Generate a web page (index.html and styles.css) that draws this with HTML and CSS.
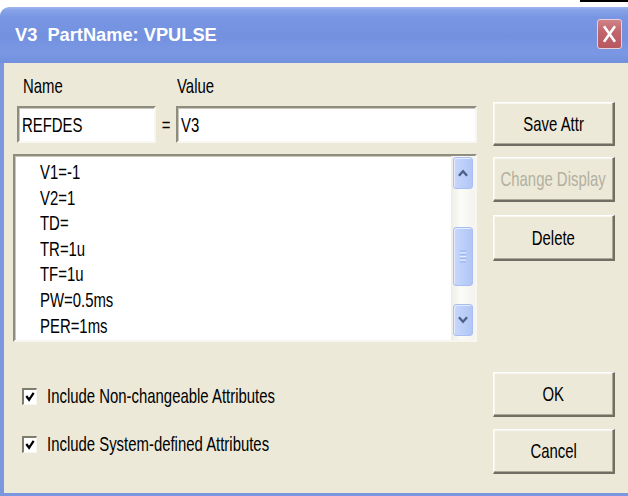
FILE: index.html
```html
<!DOCTYPE html>
<html>
<head>
<meta charset="utf-8">
<title>V3 PartName: VPULSE</title>
<link rel="stylesheet" href="styles.css">
</head>
<body>
<div class="desk-top"><i class="edge"></i></div>
<div class="window">
  <div class="titlebar">
    <span class="title">V3&nbsp;&nbsp;PartName: VPULSE</span>
    <div class="close">
      <svg width="25" height="30" viewBox="0 0 25 30"><path d="M6.5 6.5 L18.5 23.5 M18.5 6.5 L6.5 23.5" stroke="#fff" stroke-width="2.8" fill="none"/></svg>
    </div>
  </div>
  <div class="client">
    <div class="left-col">
      <div class="labels">
        <span class="lbl-name"><span class="t">Name</span></span>
        <span class="lbl-value"><span class="t">Value</span></span>
      </div>
      <div class="field-row">
        <div class="edit edit-name"><span class="t">REFDES</span></div>
        <div class="eq"><span class="t">=</span></div>
        <div class="edit edit-value"><span class="t">V3</span></div>
      </div>
      <div class="listbox">
        <div class="items">
          <div class="item"><span class="t">V1=-1</span></div>
          <div class="item"><span class="t">V2=1</span></div>
          <div class="item"><span class="t">TD=</span></div>
          <div class="item"><span class="t">TR=1u</span></div>
          <div class="item"><span class="t">TF=1u</span></div>
          <div class="item"><span class="t">PW=0.5ms</span></div>
          <div class="item"><span class="t">PER=1ms</span></div>
        </div>
        <div class="scrollbar">
          <div class="sb-btn">
            <svg width="20" height="30" viewBox="0 0 20 30"><polyline points="5.5,18 10,13 14.5,18" stroke="#4d6185" stroke-width="2.6" fill="none"/></svg>
          </div>
          <div class="sb-thumb" style="margin-top:38px">
            <svg width="20" height="57" viewBox="0 0 20 57"><g stroke-width="1"><path d="M6.5 22.5 H13.5 M6.5 26.5 H13.5 M6.5 30.5 H13.5 M6.5 34.5 H13.5" stroke="#8fb0f4"/><path d="M6.5 24.5 H13.5 M6.5 28.5 H13.5 M6.5 32.5 H13.5" stroke="#eef3ff"/></g></svg>
          </div>
          <div class="sb-space"></div>
          <div class="sb-btn">
            <svg width="20" height="30" viewBox="0 0 20 30"><polyline points="5.5,12 10,17 14.5,12" stroke="#4d6185" stroke-width="2.6" fill="none"/></svg>
          </div>
        </div>
      </div>
      <div class="checks">
        <label class="check-row">
          <span class="box"><svg width="13" height="15" viewBox="0 0 13 15"><polyline points="2.5,7 5.5,11 10.5,3.5" stroke="#000" stroke-width="2.4" fill="none"/></svg></span>
          <span class="t">Include Non-changeable Attributes</span>
        </label>
        <label class="check-row">
          <span class="box"><svg width="13" height="15" viewBox="0 0 13 15"><polyline points="2.5,7 5.5,11 10.5,3.5" stroke="#000" stroke-width="2.4" fill="none"/></svg></span>
          <span class="t">Include System-defined Attributes</span>
        </label>
      </div>
    </div>
    <div class="right-col">
      <div class="btn btn-save"><span class="t">Save Attr</span></div>
      <div class="btn btn-display disabled"><span class="t">Change Display</span></div>
      <div class="btn btn-delete"><span class="t">Delete</span></div>
      <div class="btn btn-ok"><span class="t">OK</span></div>
      <div class="btn btn-cancel"><span class="t">Cancel</span></div>
    </div>
  </div>
</div>
</body>
</html>
```

FILE: styles.css
```css
html, body {
  margin: 0;
  padding: 0;
}

body {
  width: 628px;
  height: 496px;
  overflow: hidden;
  background: #ffffff;
  font-family: "Liberation Sans", Arial, sans-serif;
  color: #000;
}

/* strip of desktop above the window */
.desk-top {
  height: 7px;
  display: flex;
  justify-content: flex-end;
}

.desk-top .edge {
  display: block;
  width: 48px;
  height: 2px;
  background: #000;
}

.window {
  width: 642px;
  height: 489px;
  display: flex;
  flex-direction: column;
}

/* caption */
.titlebar {
  flex: none;
  height: 56px;
  box-sizing: border-box;
  border-top-left-radius: 9px;
  background: linear-gradient(to bottom, #a2b8f0 0px, #87a2e8 3px, #7896e2 10px, #7391df 30px, #7a98e3 46px, #7190dd 56px);
  display: flex;
  align-items: center;
  padding-left: 15px;
  padding-right: 20px;
}

.title {
  display: inline-block;
  color: #fff;
  font-weight: bold;
  font-size: 19px;
  transform: scaleX(0.96);
  transform-origin: 0 50%;
  white-space: nowrap;
}

.close {
  margin-left: auto;
  width: 25px;
  height: 30px;
  box-sizing: border-box;
  border: 1px solid #e9d0d8;
  border-radius: 3px;
  background: linear-gradient(to bottom, #d08288, #c0646c 45%, #b8585f);
  display: flex;
  align-items: center;
  justify-content: center;
  margin-top: -3px;
}

.close svg {
  display: block;
}

/* dialog client area */
.client {
  flex: 1;
  display: flex;
  background: #ece9d8;
  border-left: 4px solid #7b97e0;
  border-bottom: 3px solid #7b97e0;
  font-size: 21px;
}

/* condensed text as drawn by the dialog */
.t {
  display: inline-block;
  transform: scaleX(0.71);
  transform-origin: 0 50%;
  white-space: nowrap;
}

.left-col {
  width: 464px;
  margin-left: 9px;
  display: flex;
  flex-direction: column;
}

.labels {
  padding-top: 11px;
  height: 24px;
  line-height: 24px;
  display: flex;
}

.lbl-name {
  margin-left: 10px;
  width: 154px;
}

.field-row {
  margin-top: 8px;
  height: 37px;
  display: flex;
}

.edit {
  box-sizing: border-box;
  height: 37px;
  background: #fff;
  border-style: solid;
  border-width: 2px;
  border-color: #8f8c80 #f7f6f0 #f7f6f0 #8f8c80;
  box-shadow: inset 1px 1px 0 #c9c6b8;
  display: flex;
  align-items: center;
  padding-left: 3px;
}

.edit-name {
  margin-left: 4px;
  width: 139px;
}

.eq {
  width: 20px;
  display: flex;
  align-items: center;
  justify-content: center;
}

.eq .t {
  transform-origin: 50% 50%;
}

.edit-value {
  flex: 1;
}

/* attribute list */
.listbox {
  margin-top: 11px;
  height: 188px;
  box-sizing: border-box;
  background: #fff;
  border-style: solid;
  border-width: 2px;
  border-color: #8f8c80 #f7f6f0 #f7f6f0 #8f8c80;
  box-shadow: inset 1px 1px 0 #c9c6b8;
  display: flex;
  overflow: hidden;
}

.items {
  flex: 1;
  padding-top: 3px;
  padding-left: 25px;
  line-height: 25.6px;
}

.scrollbar {
  width: 24px;
  flex: none;
  background: linear-gradient(to right, #eeede5, #fbfbf8 40%, #f4f3ee);
  display: flex;
  flex-direction: column;
  align-items: center;
  padding: 1px 0 4px;
  box-sizing: border-box;
}

.sb-btn,
.sb-thumb {
  width: 20px;
  box-sizing: border-box;
  border: 1px solid #a9bff3;
  border-radius: 3px;
  background: linear-gradient(to right, #c8d6fb, #bccff9 50%, #b1c6f6);
  box-shadow: inset 1px 1px 0 #e4ecff;
  display: flex;
  align-items: center;
  justify-content: center;
}

.sb-btn {
  height: 32px;
}

.sb-thumb {
  height: 59px;
}

.sb-btn svg,
.sb-thumb svg {
  display: block;
}

.sb-space {
  flex: 1;
}

/* option check boxes */
.checks {
  margin-top: 41px;
  display: flex;
  flex-direction: column;
  gap: 22px;
}

.check-row {
  height: 26px;
  display: flex;
  align-items: center;
}

.box {
  margin-left: 9px;
  margin-right: 10px;
  width: 15px;
  height: 17px;
  box-sizing: border-box;
  background: #fff;
  border-style: solid;
  border-width: 2px 1px 1px 2px;
  border-color: #7e7b6f #f7f6f0 #f7f6f0 #7e7b6f;
  display: flex;
  align-items: center;
  justify-content: center;
}

.box svg {
  display: block;
}

/* command buttons */
.right-col {
  width: 122px;
  margin-left: 16px;
  display: flex;
  flex-direction: column;
}

.btn {
  height: 45px;
  box-sizing: border-box;
  background: #ece9d8;
  border-style: solid;
  border-width: 1px 2px 2px 1px;
  border-color: #ffffff #716f64 #716f64 #ffffff;
  box-shadow: inset -1px -1px 0 #aca899, inset 1px 1px 0 #f7f6ef;
  display: flex;
  align-items: center;
  justify-content: center;
}

.btn .t {
  transform-origin: 50% 50%;
}

.btn.disabled {
  color: #b3b09f;
}

.btn-save {
  margin-top: 39px;
  height: 44px;
}

.btn-display {
  margin-top: 11px;
}

.btn-delete {
  margin-top: 13px;
  height: 46px;
}

.btn-ok {
  margin-top: 111px;
}

.btn-cancel {
  margin-top: 12px;
}
```
